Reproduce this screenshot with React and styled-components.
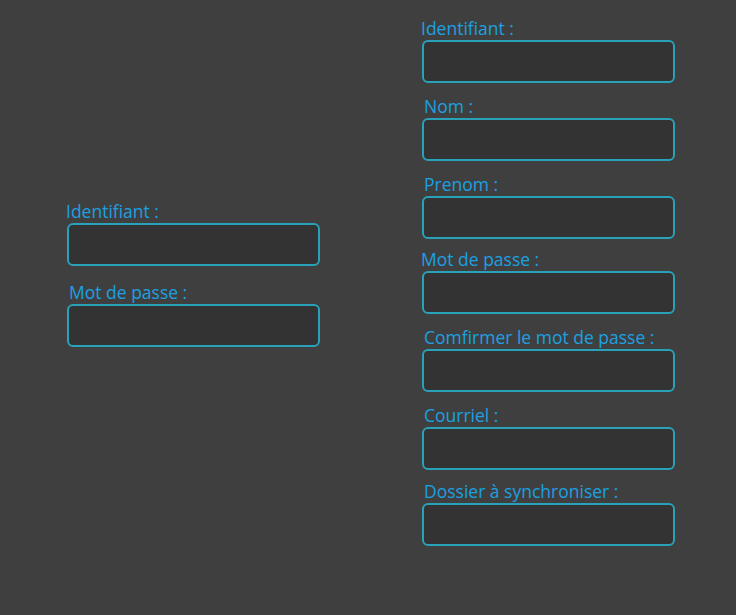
import React from "react"
import styled, { createGlobalStyle } from "styled-components"

const GlobalStyle = createGlobalStyle`
  html, body {
    margin: 0;
    padding: 0;
    background: #3f3f3f;
  }
  body {
    font-family: "Open Sans", "Noto Sans", sans-serif;
  }
`

const Page = styled.div`
  width: 736px;
  height: 615px;
  box-sizing: border-box;
  display: flex;
  align-items: flex-start;
  gap: 101px;
  padding-left: 66px;
  background: #3f3f3f;
`

const Column = styled.form`
  width: 254px;
  display: flex;
  flex-direction: column;
  margin-top: ${(p) => p.$top}px;
`

const Field = styled.div`
  display: flex;
  flex-direction: column;
  margin-bottom: ${(p) => p.$gap}px;
`

const Label = styled.label`
  color: #1ba1e2;
  font-size: 17.5px;
  line-height: 20px;
  height: 20px;
  margin-left: ${(p) => p.$indent || 0}px;
  margin-bottom: 2px;
  white-space: nowrap;
`

const Input = styled.input`
  box-sizing: border-box;
  width: 253px;
  height: 43px;
  margin-left: 1px;
  background: #333333;
  border: 2px solid #29a1b8;
  border-radius: 6px;
  outline: none;
  color: #ddd;
  font: inherit;
  padding: 0 10px;
`

const loginFields = [
  { label: "Identifiant :", indent: 0, gap: 16 },
  { label: "Mot de passe :", indent: 3, gap: 0, type: "password" },
]

const signupFields = [
  { label: "Identifiant :", indent: 0, gap: 13 },
  { label: "Nom :", indent: 3, gap: 13 },
  { label: "Prenom :", indent: 3, gap: 10 },
  { label: "Mot de passe :", indent: 0, gap: 13, type: "password" },
  { label: "Comfirmer le mot de passe :", indent: 3, gap: 13, type: "password" },
  { label: "Courriel :", indent: 3, gap: 11 },
  { label: "Dossier à synchroniser :", indent: 3, gap: 0 },
]

function FormColumn({ fields, top }) {
  return (
    <Column $top={top}>
      {fields.map((f) => (
        <Field key={f.label} $gap={f.gap}>
          <Label $indent={f.indent}>{f.label}</Label>
          <Input type={f.type || "text"} />
        </Field>
      ))}
    </Column>
  )
}

export default function App() {
  return (
    <>
      <GlobalStyle />
      <Page>
        <FormColumn fields={loginFields} top={201} />
        <FormColumn fields={signupFields} top={18} />
      </Page>
    </>
  )
}
